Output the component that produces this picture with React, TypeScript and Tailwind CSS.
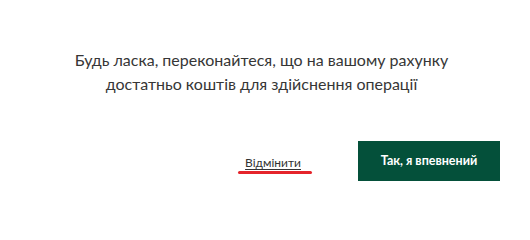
export default function App() {
    return (
        <div className="w-[530px] h-[204px] bg-white font-['Lato','Liberation_Sans',sans-serif] flex flex-col">
            {/* Повідомлення */}
            <div className="pt-[48px] pr-[7px] text-center text-[16px] leading-[24px] text-[#363636]">
                <p>Будь ласка, переконайтеся, що на вашому рахунку</p>
                <p>достатньо коштів для здійснення операції</p>
            </div>

            {/* Кнопки */}
            <div className="mt-auto mb-[23px] flex items-center justify-end gap-[57px] pr-[30px]">
                <div className="relative">
                    <button className="text-[12px] text-[#333333] underline underline-offset-2">Відмінити</button>
                    <span className="absolute left-[-7px] right-[-11px] top-[22px] h-[3px] rounded-full bg-[#e5242b]"></span>
                </div>
                <button className="h-[40px] w-[142px] bg-[#04503a] text-[12.5px] font-bold text-white">
                    Так, я впевнений
                </button>
            </div>
        </div>
    );
}
